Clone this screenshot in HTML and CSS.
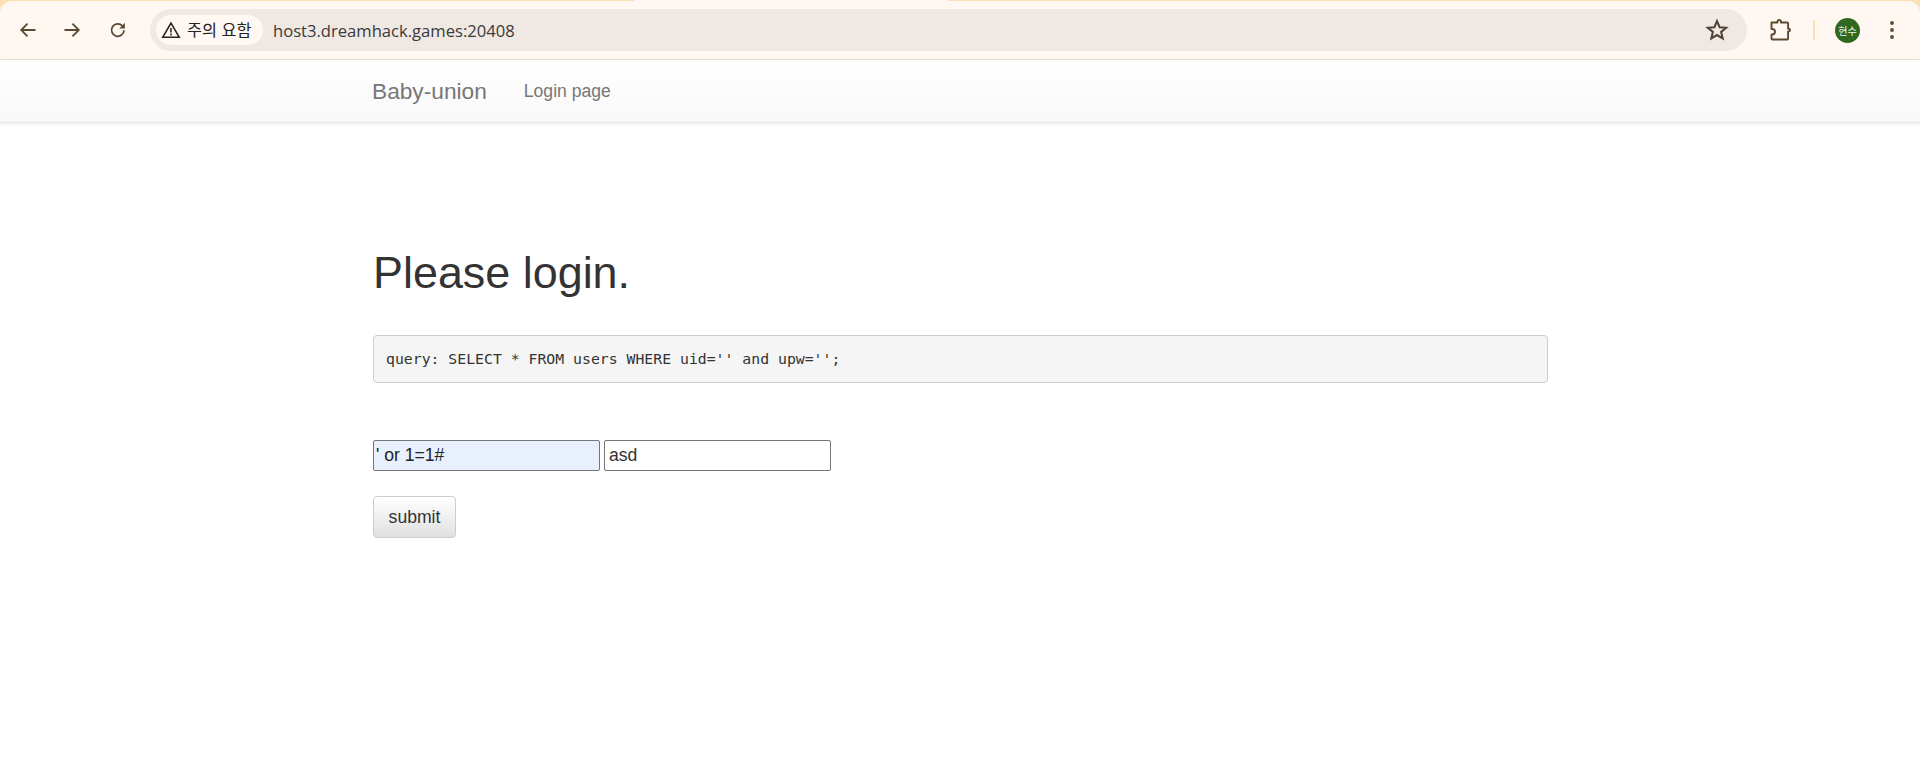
FILE: index.html
```html
<!DOCTYPE html>
<html lang="ko">
<head>
<meta charset="utf-8">
<title>Baby-union</title>
<link rel="stylesheet" href="styles.css">
</head>
<body>
<header class="chrome">
  <div class="tabstrip"><span class="strip strip-left"></span><span class="strip-tab"></span><span class="strip strip-right"></span></div>
  <div class="toolbar">
    <button class="tool tool-back" aria-label="Back"><svg width="20" height="20" viewBox="0 0 20 20"><path d="M17.5 10H3.5M9.5 3.6L3.2 10l6.3 6.4" fill="none" stroke="#5c4a33" stroke-width="1.8"/></svg></button>
    <button class="tool tool-forward" aria-label="Forward"><svg width="20" height="20" viewBox="0 0 20 20"><path d="M2.5 10h14M10.5 3.6l6.3 6.4-6.3 6.4" fill="none" stroke="#5c4a33" stroke-width="1.8"/></svg></button>
    <button class="tool tool-reload" aria-label="Reload"><svg width="20" height="20" viewBox="0 0 20 20"><path d="M16 10.2a6.2 6.2 0 1 1-1.7-4.4" fill="none" stroke="#5c4a33" stroke-width="1.8"/><path d="M16.9 2.8v5.6h-5.6z" fill="#5c4a33"/></svg></button>
    <div class="omnibox">
      <div class="chip">
        <svg class="chip-icon" width="20" height="18" viewBox="0 0 20 18"><path d="M10 2.2L18.2 16.2H1.8z" fill="none" stroke="#222" stroke-width="1.6" stroke-linejoin="miter"/><path d="M10 7v4.6M10 12.6v1.8" stroke="#222" stroke-width="1.5"/></svg>
        <span class="chip-label">주의 요함</span>
      </div>
      <span class="url">host3.dreamhack.games:20408</span>
      <svg class="star" width="24" height="24" viewBox="0 0 22 22"><path d="M11 2.9l2.4 5.5 6 .5-4.6 3.9 1.4 5.9-5.2-3.1-5.2 3.1 1.4-5.9-4.6-3.9 6-.5z" fill="none" stroke="#4e4438" stroke-width="1.9"/></svg>
    </div>
    <svg class="puzzle" width="24" height="24" viewBox="0 0 24 24"><path d="M3.5 4.500h6V3.600a1.700 1.700 0 0 1 3.400 0v.9h6.300a.9.9 0 0 1 .9.9v5.400h.6a1.300 1.300 0 0 1 0 2.600h-.6v7.200a.9.9 0 0 1-.9.9H4.400a.9.9 0 0 1-.9-.9v-4.200h.8a2.700 2.700 0 0 0 0-5.400h-.8z" fill="none" stroke="#5c4a33" stroke-width="1.9" stroke-linejoin="round"/></svg>
    <span class="divider"></span>
    <span class="avatar">현수</span>
    <svg class="kebab" width="6" height="20" viewBox="0 0 6 20"><circle cx="3" cy="3" r="1.9" fill="#5c4a33"/><circle cx="3" cy="10" r="1.9" fill="#5c4a33"/><circle cx="3" cy="17" r="1.9" fill="#5c4a33"/></svg>
  </div>
</header>
<nav class="navbar">
  <a class="brand">Baby-union</a>
  <a class="nav-link">Login page</a>
</nav>
<main class="content">
  <h1 class="title">Please login.</h1>
  <pre class="query">query: SELECT * FROM users WHERE uid='' and upw='';</pre>
  <form class="login">
    <div class="fields">
      <input class="field field-auto" type="text" value="' or 1=1#">
      <input class="field" type="text" value="asd">
    </div>
    <button class="submit" type="button">submit</button>
  </form>
</main>
</body>
</html>
```
FILE: styles.css
```css
* { box-sizing: border-box; }
html, body { margin: 0; padding: 0; }
body {
  background: #fff;
  color: #333;
  font-family: "Liberation Sans", Arial, sans-serif;
  overflow: hidden;
}
.chrome { background: #fbdfb5; height: 60px; border-bottom: 1px solid #f3e2d0; }
.tabstrip { display: flex; height: 1px; }
.strip { background: #fbdfb5; }
.strip-left { width: 634px; }
.strip-tab { width: 314px; background: #fff7f1; }
.strip-right { flex: 1; }
.toolbar {
  display: flex;
  align-items: center;
  height: 58px;
  background: #fff7f1;
  border-radius: 12px 12px 0 0;
}
.tool {
  display: flex;
  align-items: center;
  justify-content: center;
  width: 20px;
  height: 20px;
  padding: 0;
  border: 0;
  background: none;
}
.tool-back { margin-left: 18px; }
.tool-forward { margin-left: 24px; }
.tool-reload { margin-left: 26px; }
.omnibox {
  display: flex;
  align-items: center;
  width: 1597px;
  height: 42px;
  margin-left: 22px;
  padding: 0 18px 0 6px;
  background: #f0e8e2;
  border-radius: 21px;
}
.chip {
  display: flex;
  align-items: center;
  width: 107px;
  height: 30px;
  padding-left: 5px;
  background: #fff7f1;
  border-radius: 15px;
}
.chip-label {
  margin-left: 6px;
  color: #222;
  font: 16.3px "Noto Sans CJK KR", sans-serif;
  line-height: 18px;
  margin-top: -2px;
  white-space: nowrap;
}
.url {
  margin-left: 10px;
  color: #3a3a3a;
  font: 16.6px "Open Sans", sans-serif;
  flex: 1;
}
.puzzle { margin-left: 21px; }
.divider { width: 2px; height: 20px; margin-left: 21px; background: #fbdfb5; }
.avatar {
  display: flex;
  align-items: center;
  justify-content: center;
  width: 25px;
  height: 25px;
  margin-left: 20px;
  border-radius: 50%;
  background: #2f691f;
  color: #eef3ea;
  font: 10px "Noto Sans CJK KR", sans-serif;
}
.kebab { margin-left: 29px; }
.navbar {
  display: flex;
  align-items: center;
  height: 63px;
  padding-left: 372px;
  padding-top: 1px;
  background: linear-gradient(to bottom, #fff 0%, #f8f8f8 100%);
  border-bottom: 1px solid #e7e7e7;
  box-shadow: 0 1px 5px rgba(0, 0, 0, .075);
}
.brand { color: #777; font-size: 22.7px; }
.nav-link { margin-left: 37px; color: #777; font-size: 17.6px; }
.content { width: 1175px; margin-left: 373px; }
.title { margin: 125px 0 0; font-size: 44.9px; font-weight: 400; line-height: 50px; color: #333; }
.query {
  height: 48px;
  margin: 37px 0 0;
  padding: 0 12px;
  background: #f5f5f5;
  border: 1px solid #ccc;
  border-radius: 4px;
  color: #333;
  font: 14.8px/46px "DejaVu Sans Mono", monospace;
}
.login { margin-top: 57px; }
.fields { display: flex; gap: 4px; }
.field {
  width: 227px;
  height: 31px;
  padding: 0 4px;
  background: #fff;
  border: 1px solid #767676;
  border-radius: 2px;
  color: #333;
  font: 17.6px "Liberation Sans", Arial, sans-serif;
}
.field-auto { background: #e8f0fe; padding-left: 2px; color: #222; }
.submit {
  display: block;
  width: 83px;
  height: 42px;
  margin-top: 25px;
  padding: 0;
  background: linear-gradient(to bottom, #fff 0%, #e0e0e0 100%);
  border: 1px solid #ccc;
  border-radius: 4px;
  color: #333;
  font: 17.6px "Liberation Sans", Arial, sans-serif;
}
```
